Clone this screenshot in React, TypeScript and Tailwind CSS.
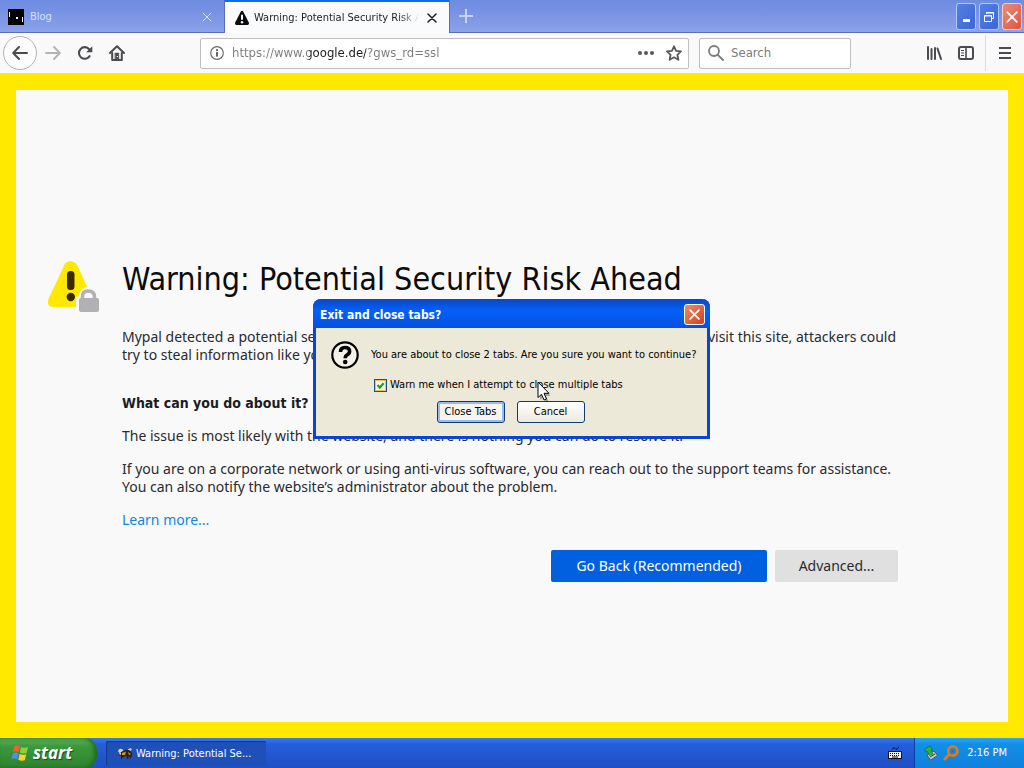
import { useState } from "react";
import type { ReactNode } from "react";

const url = "https://www.google.de/?gws_rd=ssl";

function BackIcon() {
  return (
    <svg viewBox="0 0 16 16" className="h-4 w-4" fill="none" stroke="currentColor" strokeWidth="2" strokeLinecap="round" strokeLinejoin="round">
      <path d="M15 8H1.5M7 2L1.2 8L7 14" />
    </svg>
  );
}

function ForwardIcon() {
  return (
    <svg viewBox="0 0 16 16" className="h-4 w-4" fill="none" stroke="currentColor" strokeWidth="2" strokeLinecap="round" strokeLinejoin="round">
      <path d="M1 8H14.5M9 2L14.8 8L9 14" />
    </svg>
  );
}

function ReloadIcon() {
  return (
    <svg viewBox="0 0 16 16" className="h-4 w-4" fill="none">
      <path d="M12.6 11.2A5.8 5.8 0 1 1 12.2 4.2" stroke="currentColor" strokeWidth="2.1" strokeLinecap="round" />
      <path d="M15.3 1.2V7.3H9.2Z" fill="currentColor" />
    </svg>
  );
}

function HomeIcon() {
  return (
    <svg viewBox="0 0 16 16" className="h-4 w-4" fill="none" stroke="currentColor" strokeLinecap="round" strokeLinejoin="round">
      <path d="M1 8L8 1.2L15 8" strokeWidth="2" />
      <path d="M3.2 8V15H12.8V8" strokeWidth="2" />
      <path d="M6.2 8H9.8V14.5H6.2Z" fill="currentColor" strokeWidth="0.5" />
      <path d="M8.2 11.5h0.4" stroke="#fff" strokeWidth="1" />
    </svg>
  );
}

function InfoIcon() {
  return (
    <svg viewBox="0 0 16 16" className="h-4 w-4 shrink-0" fill="none">
      <circle cx="8" cy="8" r="6.3" stroke="#6b6b6b" strokeWidth="1.2" />
      <rect x="7.1" y="7" width="1.8" height="4.6" fill="#555" />
      <rect x="7.1" y="4.2" width="1.8" height="1.8" fill="#555" />
    </svg>
  );
}

function DotsIcon() {
  return (
    <svg viewBox="0 0 16 16" className="h-4 w-4" fill="currentColor">
      <circle cx="2" cy="8" r="2" />
      <circle cx="8" cy="8" r="2" />
      <circle cx="14" cy="8" r="2" />
    </svg>
  );
}

function StarIcon() {
  return (
    <svg viewBox="0 0 16 16" className="h-4 w-4" fill="none" stroke="currentColor" strokeWidth="1.8" strokeLinejoin="round">
      <path d="M8 1.3L10.1 5.8L15 6.4L11.4 9.8L12.4 14.8L8 12.3L3.6 14.8L4.6 9.8L1 6.4L5.9 5.8Z" />
    </svg>
  );
}

function SearchIcon() {
  return (
    <svg viewBox="0 0 16 16" className="h-4 w-4 shrink-0" fill="none" stroke="#7c7c7c" strokeWidth="1.8" strokeLinecap="round">
      <circle cx="6" cy="6" r="5" />
      <path d="M9.8 9.8L15 15" />
    </svg>
  );
}

function LibraryIcon() {
  return (
    <svg viewBox="0 0 16 16" className="h-4 w-4" fill="none" stroke="currentColor" strokeWidth="2" strokeLinecap="round">
      <path d="M2 2V14M5.5 4V14M9 3V14M11.5 3.5L15 14" />
    </svg>
  );
}

function SidebarIcon() {
  return (
    <svg viewBox="0 0 16 16" className="h-4 w-4" fill="none" stroke="currentColor">
      <rect x="1" y="2" width="14" height="12" rx="2" strokeWidth="2" />
      <path d="M8 2V14" strokeWidth="1.6" />
      <path d="M3 5.5H6M3 8H6M3 10.5H6" strokeWidth="1" />
    </svg>
  );
}

function CloseIcon({ className }: { className: string }) {
  return (
    <svg viewBox="0 0 10 10" className={className} fill="none" stroke="currentColor" strokeLinecap="round">
      <path d="M1 1L9 9M9 1L1 9" />
    </svg>
  );
}

function WarningTabIcon() {
  return (
    <svg viewBox="0 0 16 16" className="h-4 w-4 shrink-0">
      <path d="M6.7 1.7Q8 0 9.3 1.7L14.8 12.6Q15.4 15 13.4 15H2.6Q0.6 15 1.2 12.6Z" fill="#0c0c0d" />
      <rect x="7" y="4.5" width="2" height="5.5" rx="1" fill="#fff" />
      <circle cx="8" cy="12.2" r="1.2" fill="#fff" />
    </svg>
  );
}

function WarningLockIcon() {
  return (
    <svg viewBox="0 0 52 52" className="h-13 w-13 shrink-0">
      <path d="M17 2.5Q22.5 -2.500 28 2.5Q29.500 4 44 37Q47 46 39 46H6Q-2 46 0.5 38Z" fill="#ffe900" />
      <rect x="19" y="10" width="7.5" height="19" rx="3.5" fill="#3e2800" />
      <circle cx="22.8" cy="36" r="4.2" fill="#3e2800" />
      <path d="M28 52V39Q28 35 31 35Q32 26 41 26Q51 26 51 35V52Z" fill="#f9f9fa" />
      <path d="M34.5 38V35.5Q34.5 30 40 30Q46.5 30 46.5 36V38" fill="none" stroke="#b1b1b3" strokeWidth="3.5" />
      <rect x="31" y="37" width="20" height="14" rx="2" fill="#b1b1b3" />
    </svg>
  );
}

function QuestionIcon() {
  return (
    <svg viewBox="0 0 28 28" className="h-7 w-7 shrink-0" fill="none">
      <circle cx="14" cy="14" r="12.7" fill="#f4f2e8" stroke="#000" strokeWidth="2.2" />
      <path d="M9.5 11Q9.5 6.5 14 6.5Q18.6 6.5 18.6 10.3Q18.6 12.5 16.3 13.8Q14.2 15 14.2 17.2" stroke="#000" strokeWidth="3.6" />
      <circle cx="14.2" cy="21" r="2.3" fill="#000" />
    </svg>
  );
}

function WindowsLogo() {
  return (
    <svg viewBox="0 0 18 18" className="h-[18px] w-[18px]">
      <path d="M3.5 2Q6 0.5 9 2.5L7.8 8.2Q5 6.5 2 8Z" fill="#f0622c" />
      <path d="M10 3Q13 4.5 17 3L15.5 9Q12 10.2 8.9 8.6Z" fill="#8ad13c" />
      <path d="M1.8 9.2Q5 7.8 7.5 9.5L6.2 15.2Q3.5 13.5 0.5 15Z" fill="#4f8df2" />
      <path d="M8.6 10Q12 11.5 15.2 10.3L13.8 16.2Q10.5 17.3 7.3 15.8Z" fill="#fbd02f" />
    </svg>
  );
}

function BeeIcon() {
  return (
    <svg viewBox="0 0 16 16" className="h-4 w-4 shrink-0">
      <path d="M1 5Q2 2 5 3L8 6L3 8ZM10 5Q12 1 15 3L12 7Z" fill="#d9d4c5" />
      <path d="M3 7Q7 3 12 4Q16 6 15 10L13 13L12 9L11 14L9 10L6 11L4 14L4 10L1 9Z" fill="#2b2116" />
      <path d="M5 7L9 5.5L8 9L5 9ZM11 6L14 8L12 9Z" fill="#dd922a" />
      <path d="M1.5 8L4 6.5L4 9Z" fill="#f2c58a" />
    </svg>
  );
}

function KeyboardIcon() {
  return (
    <svg viewBox="0 0 14 14" className="h-3.5 w-3.5">
      <path d="M4 3.5L6 1.5L8 3.5L11 1" fill="none" stroke="#111" />
      <rect x="0.5" y="5.5" width="13" height="7" fill="#eee" stroke="#111" />
      <path d="M2 7.5H12M2 9.5H12" stroke="#111" strokeDasharray="1 1" />
      <path d="M4 11H10" stroke="#111" />
    </svg>
  );
}

function SafelyRemoveIcon() {
  return (
    <svg viewBox="0 0 16 16" className="h-4 w-4">
      <path d="M4 10L11 6L14.5 10.5L7.5 15Z" fill="#c8ccd0" stroke="#444" strokeWidth="0.8" />
      <path d="M7 12L12 9" stroke="#333" />
      <path d="M1.5 4.5L7 0.8L9.5 4.5L8 5L10 9L6.5 10.5L4.5 6.5L3 7Z" fill="#2fb32f" stroke="#0c6b1c" strokeWidth="0.6" />
    </svg>
  );
}

function MagnifierIcon() {
  return (
    <svg viewBox="0 0 16 16" className="h-4 w-4" fill="none">
      <circle cx="9.8" cy="6" r="4.6" stroke="#e07a1b" strokeWidth="2.6" />
      <path d="M6 9.8L1.9 14" stroke="#e07a1b" strokeWidth="3" strokeLinecap="round" />
      <circle cx="9.8" cy="6" r="1" fill="#a14c10" />
    </svg>
  );
}

function CursorIcon() {
  return (
    <svg viewBox="0 0 14 22" className="absolute left-[537px] top-[381px] h-[22px] w-3.5">
      <path d="M3 3V19L6.5 16L9 21.5L11.5 20.5L9 15H13.5Z" fill="#000" opacity="0.3" />
      <path d="M1 1V16.5L4.5 13.3L7 19L9.5 18L7 12.3H12Z" fill="#fff" stroke="#000" />
    </svg>
  );
}

function ToolbarButton({ label, className = "h-8 w-8 text-[#4a4a4f]", children }: { label: string; className?: string; children: ReactNode }) {
  return (
    <button aria-label={label} className={`flex items-center justify-center ${className}`}>
      {children}
    </button>
  );
}

function TabBar() {
  return (
    <div className="flex h-[33px] justify-between bg-linear-to-b from-[#6d8ce0] via-[#7d95e4] to-[#8ba4ea]">
      <div className="flex">
        <div className="flex w-[225px] items-center gap-1.5 border-r border-b border-[#5d6cb8] px-2 pt-0.5 text-[#d5e0ff]">
          <svg viewBox="0 0 16 16" className="h-4 w-4 shrink-0">
            <rect width="16" height="16" fill="#000" />
            <path d="M1.5 3V8M14.5 8V13" stroke="#fff" />
            <rect x="8" y="8" width="2" height="2" fill="#fff" />
          </svg>
          <span className="grow">Blog</span>
          <button aria-label="Close Blog" className="p-1">
            <CloseIcon className="h-2.5 w-2.5" />
          </button>
        </div>
        <div className="flex w-56 items-center gap-1 border-t-2 border-[#0a6cf0] bg-[#fafbfc] pl-[9px] pr-2 text-[#1c1c1e]">
          <WarningTabIcon />
          <span className="grow overflow-hidden whitespace-nowrap mask-r-from-88% mask-r-to-100%">
            Warning: Potential Security Risk Ahead
          </span>
          <button aria-label="Close tab" className="p-1">
            <CloseIcon className="h-2.5 w-2.5 stroke-[1.5]" />
          </button>
        </div>
        <button aria-label="New tab" className="flex w-8 items-center justify-center border-b border-l border-[#5d6cb8] text-[#c6d4fb]">
          <svg viewBox="0 0 14 14" className="h-3.5 w-3.5" stroke="currentColor" strokeWidth="2">
            <path d="M7 0V14M0 7H14" />
          </svg>
        </button>
      </div>
      <div className="flex grow items-start justify-end gap-[3px] border-b border-[#5d6cb8] pt-[3px] pr-0.5">
        <button aria-label="Minimize" className="flex h-[27px] w-5 items-center justify-center rounded-[3px] border border-[#b4c8f5] bg-linear-to-br from-[#5580e0] to-[#3a66da]">
          <span className="mt-2 h-[3px] w-[7px] bg-white" />
        </button>
        <button aria-label="Restore" className="flex h-[27px] w-5 items-center justify-center rounded-[3px] border border-[#b4c8f5] bg-linear-to-br from-[#5580e0] to-[#3a66da]">
          <svg viewBox="0 0 12 12" className="h-3 w-3" fill="none" stroke="#fff">
            <path d="M3.5 3V1.5H10.5V7.5H9M3 2H11" />
            <path d="M1.5 4.5H8.5V10.5H1.5ZM1 5H9" />
          </svg>
        </button>
        <button aria-label="Close window" className="flex h-[27px] w-5 items-center justify-center rounded-[3px] border border-[#f3d0cd] bg-linear-to-br from-[#ee8a75] to-[#dd5343] text-white">
          <CloseIcon className="h-3 w-3 stroke-[1.5]" />
        </button>
      </div>
    </div>
  );
}

function Toolbar() {
  const [address, setAddress] = useState(url);

  return (
    <div className="flex h-[41px] items-center border-b border-[#d8d8c8] bg-[#f9f9fa] px-[3px]">
      <ToolbarButton label="Back" className="h-[34px] w-[34px] rounded-full border border-[#b4b4b4] bg-[#fdfdfd] text-[#4a4a4f]">
        <BackIcon />
      </ToolbarButton>
      <ToolbarButton label="Forward" className="h-8 w-8 text-[#b4b4b6]">
        <ForwardIcon />
      </ToolbarButton>
      <ToolbarButton label="Reload">
        <ReloadIcon />
      </ToolbarButton>
      <ToolbarButton label="Home">
        <HomeIcon />
      </ToolbarButton>
      <div className="ml-[67px] flex h-[31px] grow items-center rounded-xs border border-[#bfbfbf] bg-white px-2 text-[#58585a]">
        <InfoIcon />
        {/* the host name is darker than the rest of the address */}
        <input
          type="text"
          aria-label="Address"
          value={address}
          onChange={(e) => setAddress(e.target.value)}
          className="ml-[7px] min-w-0 grow bg-[linear-gradient(to_right,#7b7b7d_77px,#1c1c1e_77px,#1c1c1e_134px,#7b7b7d_134px)] bg-clip-text text-[13px] text-transparent outline-none"
        />
        <button aria-label="Page actions" className="mr-3">
          <DotsIcon />
        </button>
        <button aria-label="Bookmark this page" className="-mr-0.5">
          <StarIcon />
        </button>
      </div>
      <div className="ml-2.5 flex h-[31px] w-[152px] items-center gap-[7px] rounded-xs border border-[#bfbfbf] bg-white px-2">
        <SearchIcon />
        <input type="text" aria-label="Search" placeholder="Search" className="w-full min-w-0 text-[13px] outline-none placeholder:text-[#7b7b7d]" />
      </div>
      <div className="ml-[67px] flex items-center">
        <ToolbarButton label="Library">
          <LibraryIcon />
        </ToolbarButton>
        <ToolbarButton label="Sidebars">
          <SidebarIcon />
        </ToolbarButton>
        <div className="ml-[3px] h-9 w-px bg-[#dcdcdc]" />
        <ToolbarButton label="Menu" className="ml-[3px] h-8 w-8 text-[#4a4a4f]">
          <svg viewBox="0 0 12 12" className="h-3 w-3" stroke="currentColor" strokeWidth="2">
            <path d="M0 1H12M0 6H12M0 11H12" />
          </svg>
        </ToolbarButton>
      </div>
    </div>
  );
}

function WarningPage() {
  return (
    <main className="flex grow flex-col justify-center border-16 border-[#ffe900] bg-[#f9f9fa] px-8 pt-[30px] font-['Noto_Sans',sans-serif] text-sm leading-[18px] text-[#2a2a2e]">
      <div className="mx-auto flex w-full max-w-[928px] items-start gap-[22px]">
        <WarningLockIcon />
        <div className="w-full max-w-[776px]">
          <h1 className="mb-[30px] font-['DejaVu_Sans_Condensed',sans-serif] text-[32px] leading-[37px] whitespace-nowrap text-[#0c0c0d]">Warning: Potential Security Risk Ahead</h1>
          <p>
            Mypal detected a potential security threat and did not continue to www.google.de. If you visit this site, attackers could
            try to steal information like your passwords, emails, or credit card details.
          </p>
          <h2 className="mt-[30px] font-['DejaVu_Sans_Condensed',sans-serif] font-bold text-[#1c1c1e]">What can you do about it?</h2>
          <p className="mt-[15px]">The issue is most likely with the website, and there is nothing you can do to resolve it.</p>
          <p className="mt-[15px]">
            If you are on a corporate network or using anti-virus software, you can reach out to the support teams for assistance.
            You can also notify the website’s administrator about the problem.
          </p>
          <p className="mt-[15px]">
            <a href="#learn-more" className="text-[#1186e0]">Learn more...</a>
          </p>
          <div className="mt-[21px] flex justify-end gap-2">
            <button className="h-8 w-[216px] rounded-xs bg-[#0060df] text-white">Go Back (Recommended)</button>
            <button className="h-8 w-[123px] rounded-xs bg-[#e0e0e1]">Advanced...</button>
          </div>
        </div>
      </div>
    </main>
  );
}

function CloseTabsDialog() {
  const [warn, setWarn] = useState(true);

  return (
    <div
      role="dialog"
      aria-labelledby="dialog-title"
      className="absolute left-[313px] top-[299px] w-[397px] rounded-t-lg border-x-3 border-b-3 border-[#0a44d6] bg-[#ece9d8] text-black"
    >
      <div className="-mx-[3px] flex h-[29px] items-center justify-between rounded-t-lg bg-linear-to-b from-[#0847c6] via-[#0460f8] via-40% to-[#0450e0] pt-0.5 pl-[7px] pr-[5px]">
        <h2 id="dialog-title" className="text-xs font-bold text-white">Exit and close tabs?</h2>
        <button aria-label="Close" className="flex h-[21px] w-[21px] items-center justify-center rounded-[3px] border border-white bg-linear-to-br from-[#ee8a6a] to-[#cf3d1c] text-white">
          <CloseIcon className="h-[11px] w-[11px] stroke-[1.5]" />
        </button>
      </div>
      <div className="px-[15px] py-[13px]">
        <div className="flex items-center gap-3">
          <QuestionIcon />
          <p className="whitespace-nowrap">You are about to close 2 tabs. Are you sure you want to continue?</p>
        </div>
        <div className="mt-2 flex h-4 items-center gap-[3px] pl-[43px]">
          <span className="grid">
            <input
              id="warn"
              type="checkbox"
              checked={warn}
              onChange={(e) => setWarn(e.target.checked)}
              className="peer col-start-1 row-start-1 h-[13px] w-[13px] appearance-none border border-[#1c5180] bg-[#f8f5e4] shadow-[inset_0_0_0_1px_#f0c060]"
            />
            <svg viewBox="0 0 13 13" className="pointer-events-none invisible col-start-1 row-start-1 h-[13px] w-[13px] peer-checked:visible" fill="none">
              <path d="M3.5 6L5.7 8.5L9.7 4.2" stroke="#21a121" strokeWidth="2.2" />
            </svg>
          </span>
          <label htmlFor="warn" className="whitespace-nowrap">Warn me when I attempt to close multiple tabs</label>
        </div>
        <div className="mt-2 flex justify-center gap-3 pr-0.5">
          <button className="h-[22px] w-[68px] rounded-[3px] border border-[#0b3c74] bg-[#f6f5ef] shadow-[inset_0_0_0_2px_#9db9ee]">Close Tabs</button>
          <button className="h-[22px] w-[68px] rounded-[3px] border border-[#0b3c74] bg-linear-to-b from-white to-[#eceade]">Cancel</button>
        </div>
      </div>
    </div>
  );
}

function Taskbar() {
  return (
    <footer className="flex h-[30px] items-stretch bg-linear-to-b from-[#3a7be8] via-[#245edb] via-20% to-[#1f4fc4] text-white">
      <button className="flex w-[97px] items-center gap-1 rounded-r-xl bg-linear-to-b from-[#5fae5c] via-[#3a983a] via-30% to-[#2f8330] pl-[11px] shadow-[inset_-3px_0_4px_#1f6b22]">
        <WindowsLogo />
        <span className="font-['Open_Sans',sans-serif] text-[17px] leading-5 font-bold italic [text-shadow:1px_1px_1px_#1b4a1c]">start</span>
      </button>
      <button className="mt-[3px] mb-0.5 ml-[9px] flex w-[160px] items-center gap-[3px] rounded-xs bg-[#1e50b8] pl-[11px] shadow-[inset_1px_1px_1px_#143a8c]">
        <BeeIcon />
        <span>Warning: Potential Se...</span>
      </button>
      <div className="ml-auto flex items-center gap-3">
        <KeyboardIcon />
        <div className="flex h-full items-center gap-1 border-l border-[#0a3fa0] bg-linear-to-b from-[#2aa5f3] via-[#118fe8] via-20% to-[#1180dc] pl-2 pr-[17px]">
          <SafelyRemoveIcon />
          <MagnifierIcon />
          <span className="ml-1 whitespace-nowrap">2:16 PM</span>
        </div>
      </div>
    </footer>
  );
}

export default function App() {
  return (
    <div className="relative flex min-h-screen flex-col overflow-hidden font-['DejaVu_Sans_Condensed','Noto_Sans',sans-serif] text-[11px] leading-4">
      <TabBar />
      <Toolbar />
      <WarningPage />
      <Taskbar />
      <CloseTabsDialog />
      <CursorIcon />
    </div>
  );
}
